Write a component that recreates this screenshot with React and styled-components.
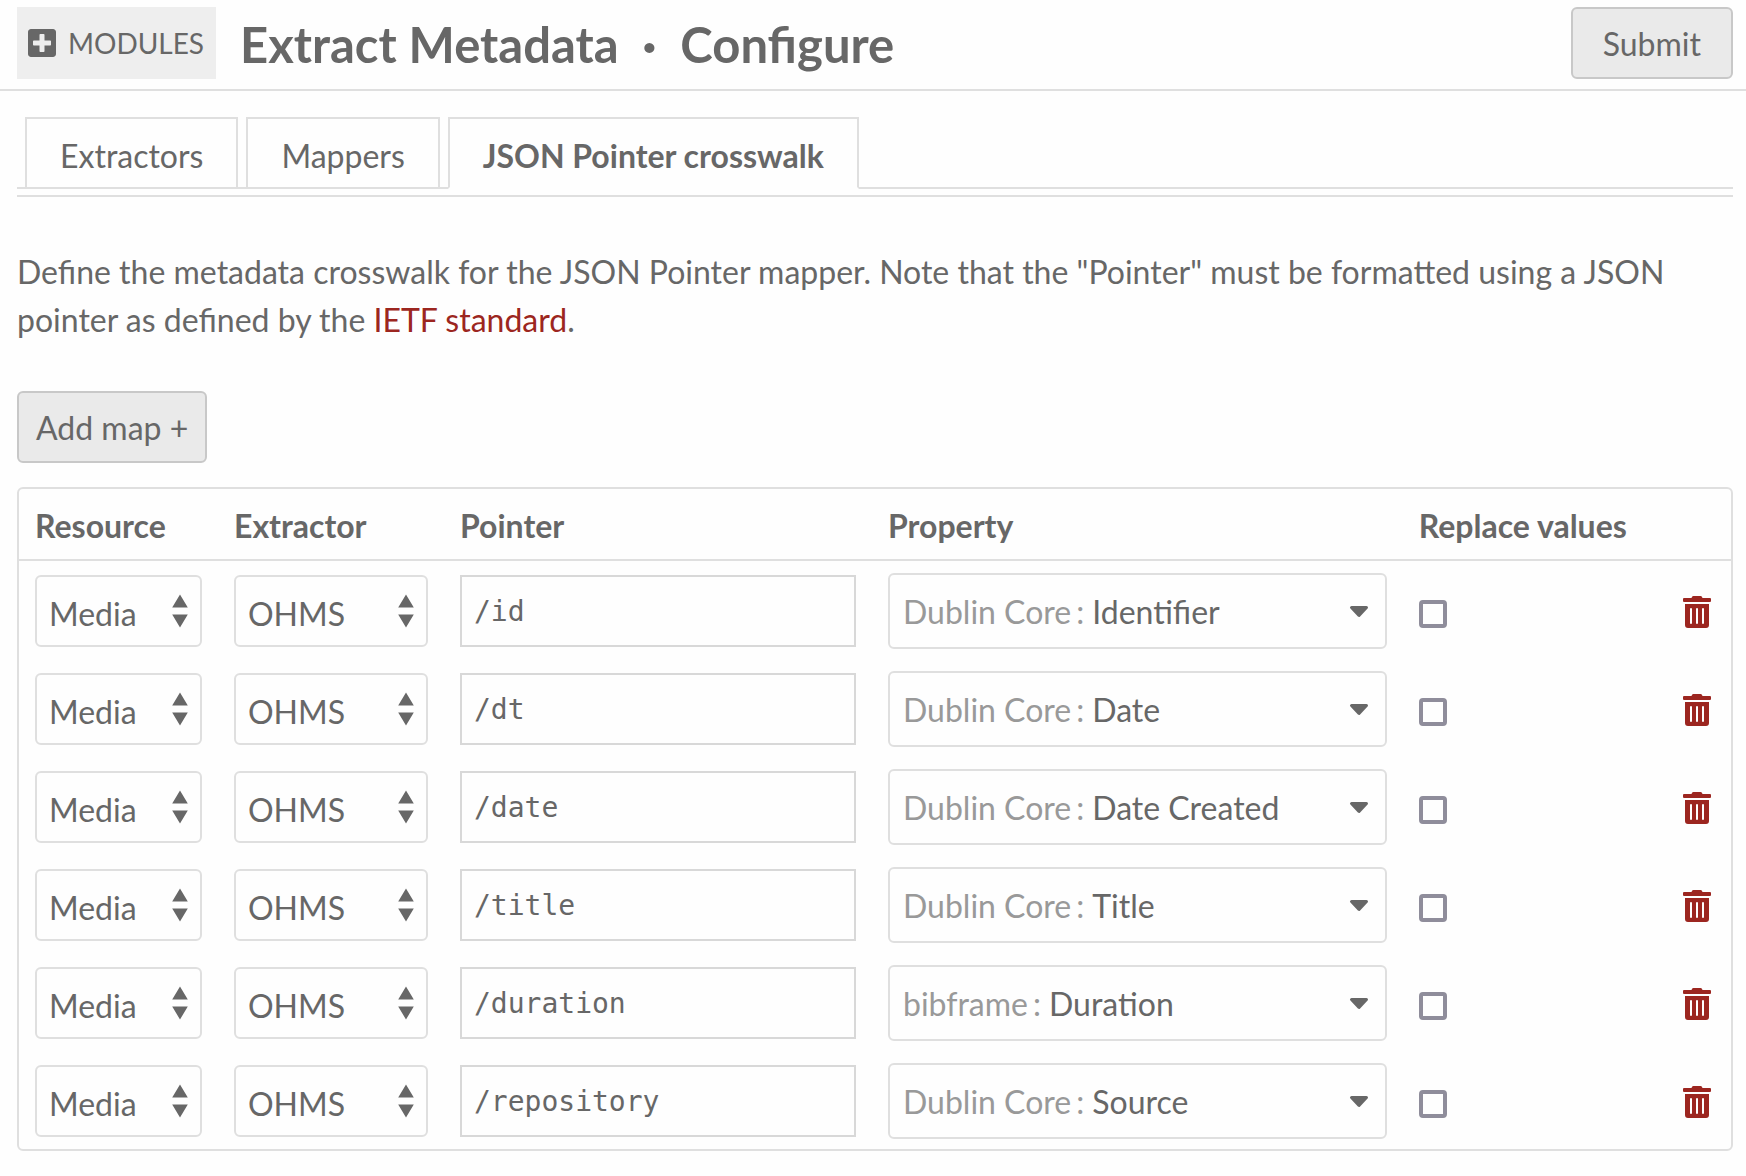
import React, { useState } from 'react';
import styled, { createGlobalStyle, css } from 'styled-components';
import { FaPlusSquare, FaTrashAlt } from 'react-icons/fa';

const color = {
  page: '#fefefe',
  text: '#676767',
  muted: '#999999',
  line: '#dfdfdf',
  inputLine: '#d8d8d8',
  buttonLine: '#c8c8c8',
  button: '#eaeaea',
  modules: '#eeeeee',
  red: '#9c2620',
  check: '#8f8d9b',
};

const GlobalStyle = createGlobalStyle`
  *, *::before, *::after { box-sizing: border-box; }
  body {
    margin: 0;
    background: ${color.page};
    color: ${color.text};
    font: 400 32px/48px Lato, "Open Sans", sans-serif;
  }
  button, input, select { font: inherit; color: inherit; margin: 0; }
`;

const Header = styled.header`
  display: flex;
  align-items: center;
  gap: 24px;
  padding: 7px 13px 10px 17px;
  border-bottom: 2px solid ${color.line};
`;

const ModulesButton = styled.button`
  display: flex;
  align-items: center;
  gap: 12px;
  height: 72px;
  padding: 0 12px 0 11px;
  border: 0;
  background: ${color.modules};
  font-size: 28px;
  text-transform: uppercase;

  svg { width: 28px; height: 32px; }
`;

const Title = styled.h1`
  flex: 1;
  display: flex;
  margin: 0;
  padding-top: 2px;
  font-size: 49px;
  line-height: 70px;
  font-weight: 700;
`;

const Separator = styled.span`
  margin: 0 24px;
  font-weight: 900;
`;

const Button = styled.button`
  height: 72px;
  padding: 2px ${(p) => (p.$wide ? 30 : 17)}px 0;
  border: 2px solid ${color.buttonLine};
  border-radius: 6px;
  background: ${color.button};
`;

const Content = styled.main`
  padding: 26px 13px 24px 17px;
`;

const Tabs = styled.nav`
  display: flex;
  gap: 8px;
  padding: 0 8px;
  border-bottom: 2px solid ${color.line};
`;

const Tab = styled.a`
  margin-bottom: -2px;
  padding: 13px 33px 7px;
  border: 2px solid ${color.line};
  color: inherit;
  text-decoration: none;
  ${(p) =>
    p.$active &&
    css`
      border-bottom-color: ${color.page};
      font-weight: 700;
    `}
`;

const Section = styled.section`
  margin-top: 6px;
  padding-top: 51px;
  border-top: 2px solid ${color.line};
`;

const Intro = styled.p`
  margin: 0 0 47px;
`;

const Link = styled.a`
  color: ${color.red};
  text-decoration: none;
`;

const TableFrame = styled.div`
  margin-top: 24px;
  border: 2px solid ${color.line};
  border-radius: 6px;
`;

const Table = styled.table`
  width: 100%;
  table-layout: fixed;
  border-collapse: separate;
  border-spacing: 0;
`;

const Col = styled.col`
  width: ${(p) => p.$width};
`;

const HeadCell = styled.th`
  padding: 13px 16px 9px;
  border-bottom: 2px solid ${color.line};
  text-align: left;
  font-weight: 700;
  white-space: nowrap;
`;

const Cell = styled.td`
  padding: 12px 16px 10px;
  vertical-align: middle;
`;

const SelectFrame = styled.div`
  position: relative;
  display: flex;

  svg {
    position: absolute;
    right: 14px;
    top: 19px;
    width: 16px;
    height: 34px;
    fill: currentColor;
    pointer-events: none;
  }
`;

const Select = styled.select`
  appearance: none;
  width: 100%;
  height: 72px;
  padding: 6px 40px 0 12px;
  border: 2px solid ${color.line};
  border-radius: 6px;
  background: ${color.page};
`;

const PointerInput = styled.input`
  display: block;
  width: 100%;
  height: 72px;
  padding: 0 12px;
  border: 2px solid ${color.inputLine};
  border-radius: 0;
  background: ${color.page};
  font-family: "DejaVu Sans Mono", monospace;
  font-size: 28px;
`;

const PropertyBox = styled.div`
  position: relative;
  display: flex;
  align-items: center;
  height: 76px;
  padding: 2px 0 0 13px;
  border: 2px solid ${color.line};
  border-radius: 6px;

  svg {
    position: absolute;
    right: 16px;
    top: 30px;
    width: 20px;
    height: 14px;
    fill: currentColor;
    stroke: currentColor;
    stroke-width: 3;
    stroke-linejoin: round;
    pointer-events: none;
  }
`;

const Vocabulary = styled.label`
  display: flex;
  gap: 5px;
  margin-right: 8px;
  color: ${color.muted};
  white-space: nowrap;
`;

const PropertySelect = styled.select`
  appearance: none;
  flex: 1;
  min-width: 0;
  height: 70px;
  padding: 0 48px 0 0;
  border: 0;
  background: transparent;
`;

const Checkbox = styled.input`
  appearance: none;
  display: block;
  width: 28px;
  height: 28px;
  border: 4px solid ${color.check};
  border-radius: 4px;
  background: ${color.page};

  &:checked { background: ${color.check}; }
`;

const CheckLabel = styled.label`
  display: flex;
  padding-top: 6px;
`;

const DeleteButton = styled.button`
  display: flex;
  padding: 2px 0 0;
  border: 0;
  background: none;
  color: ${color.red};

  svg { width: 28px; height: 32px; }
`;

const UpDownArrows = () => (
  <svg viewBox="0 0 16 34" aria-hidden="true">
    <path d="M8 0.5 15.8 13.5H0.2Z M0.2 20.5H15.8L8 33.5Z" />
  </svg>
);

const CaretDown = () => (
  <svg viewBox="0 0 20 14" aria-hidden="true">
    <path d="M2.5 2.5H17.5L10 10.5Z" />
  </svg>
);

const initialMaps = [
  { pointer: '/id', vocabulary: 'Dublin Core', property: 'Identifier' },
  { pointer: '/dt', vocabulary: 'Dublin Core', property: 'Date' },
  { pointer: '/date', vocabulary: 'Dublin Core', property: 'Date Created' },
  { pointer: '/title', vocabulary: 'Dublin Core', property: 'Title' },
  { pointer: '/duration', vocabulary: 'bibframe', property: 'Duration' },
  { pointer: '/repository', vocabulary: 'Dublin Core', property: 'Source' },
].map((m, i) => ({ ...m, id: i }));

function MapRow({ map, onDelete }) {
  const propertyId = `property-${map.id}`;
  return (
    <tr>
      <Cell>
        <SelectFrame>
          <Select aria-label="Resource" defaultValue="Media">
            <option>Media</option>
          </Select>
          <UpDownArrows />
        </SelectFrame>
      </Cell>
      <Cell>
        <SelectFrame>
          <Select aria-label="Extractor" defaultValue="OHMS">
            <option>OHMS</option>
          </Select>
          <UpDownArrows />
        </SelectFrame>
      </Cell>
      <Cell>
        <PointerInput type="text" aria-label="Pointer" defaultValue={map.pointer} />
      </Cell>
      <Cell>
        <PropertyBox>
          <Vocabulary htmlFor={propertyId}>
            <span>{map.vocabulary}</span>
            <span>:</span>
          </Vocabulary>
          <PropertySelect id={propertyId} defaultValue={map.property}>
            <option>{map.property}</option>
          </PropertySelect>
          <CaretDown />
        </PropertyBox>
      </Cell>
      <Cell>
        <CheckLabel>
          <Checkbox type="checkbox" aria-label="Replace values" />
        </CheckLabel>
      </Cell>
      <Cell>
        <DeleteButton type="button" aria-label="Delete map" onClick={onDelete}>
          <FaTrashAlt />
        </DeleteButton>
      </Cell>
    </tr>
  );
}

export default function App() {
  const [maps, setMaps] = useState(initialMaps);

  const addMap = () =>
    setMaps((list) => [
      ...list,
      { id: Date.now(), pointer: '', vocabulary: 'Dublin Core', property: 'Title' },
    ]);

  return (
    <>
      <GlobalStyle />
      <Header>
        <ModulesButton type="button">
          <FaPlusSquare />
          Modules
        </ModulesButton>
        <Title>
          <span>Extract Metadata</span>
          <Separator>·</Separator>
          <span>Configure</span>
        </Title>
        <Button type="submit" $wide>Submit</Button>
      </Header>
      <Content>
        <Tabs>
          <Tab href="#extractors">Extractors</Tab>
          <Tab href="#mappers">Mappers</Tab>
          <Tab href="#crosswalk" $active aria-current="page">JSON Pointer crosswalk</Tab>
        </Tabs>
        <Section id="crosswalk">
          <Intro>
            Define the metadata crosswalk for the JSON Pointer mapper. Note that the "Pointer" must be
            formatted using a JSON pointer as defined by the <Link href="#ietf">IETF standard</Link>.
          </Intro>
          <Button type="button" onClick={addMap}>Add map +</Button>
          <TableFrame>
            <Table>
              <colgroup>
                <Col $width="199px" />
                <Col $width="226px" />
                <Col $width="25%" />
                <Col $width="31%" />
                <Col />
                <Col $width="64px" />
              </colgroup>
              <thead>
                <tr>
                  <HeadCell scope="col">Resource</HeadCell>
                  <HeadCell scope="col">Extractor</HeadCell>
                  <HeadCell scope="col">Pointer</HeadCell>
                  <HeadCell scope="col">Property</HeadCell>
                  <HeadCell scope="col">Replace values</HeadCell>
                  <HeadCell scope="col" aria-label="Actions" />
                </tr>
              </thead>
              <tbody>
                {maps.map((map) => (
                  <MapRow
                    key={map.id}
                    map={map}
                    onDelete={() => setMaps((list) => list.filter((m) => m.id !== map.id))}
                  />
                ))}
              </tbody>
            </Table>
          </TableFrame>
        </Section>
      </Content>
    </>
  );
}
